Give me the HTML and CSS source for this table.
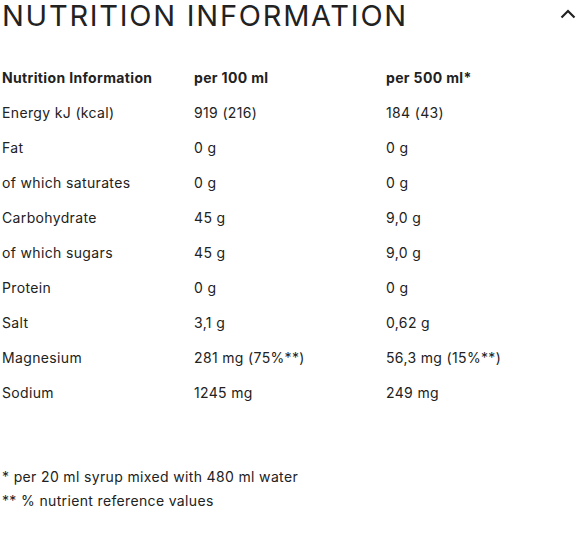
FILE: index.html
```html
<!DOCTYPE html>
<html lang="en">
<head>
    <meta charset="UTF-8">
    <meta name="viewport" content="width=device-width, initial-scale=1.0">
    <title>Nutrition Information</title>
    <link rel="stylesheet" href="styles.css">
</head>
<body>
    <div class="panel">
        <div class="panel-head">
            <h2>NUTRITION INFORMATION</h2>
            <svg class="chevron" width="16" height="10" viewBox="0 0 16 10">
                <path d="M1.5 8.5 L8 2 L14.5 8.5" fill="none" stroke="#222" stroke-width="2.2"/>
            </svg>
        </div>
        <table class="nutrition">
            <tr class="head"><td>Nutrition Information</td><td>per 100 ml</td><td>per 500 ml*</td></tr>
            <tr><td>Energy kJ (kcal)</td><td>919 (216)</td><td>184 (43)</td></tr>
            <tr><td>Fat</td><td>0 g</td><td>0 g</td></tr>
            <tr><td>of which saturates</td><td>0 g</td><td>0 g</td></tr>
            <tr><td>Carbohydrate</td><td>45 g</td><td>9,0 g</td></tr>
            <tr><td>of which sugars</td><td>45 g</td><td>9,0 g</td></tr>
            <tr><td>Protein</td><td>0 g</td><td>0 g</td></tr>
            <tr><td>Salt</td><td>3,1 g</td><td>0,62 g</td></tr>
            <tr><td>Magnesium</td><td>281 mg (75%**)</td><td>56,3 mg (15%**)</td></tr>
            <tr><td>Sodium</td><td>1245 mg</td><td>249 mg</td></tr>
        </table>
        <div class="notes">
            <p>* per 20 ml syrup mixed with 480 ml water</p>
            <p>** % nutrient reference values</p>
        </div>
    </div>
</body>
</html>
```

FILE: styles.css
```css
body {
    margin: 0;
    font-family: Inter, "Open Sans", sans-serif;
    color: #222;
    background: #fff;
    letter-spacing: 0.35px;
}
.panel {
    padding: 0 0 0 2px;
}
.panel-head {
    display: flex;
    justify-content: space-between;
    align-items: center;
}
.panel-head h2 {
    margin: 0;
    font-size: 29px;
    font-weight: 400;
    letter-spacing: 1.75px;
    line-height: 32px;
}
.chevron {
    margin-right: 1px;
    margin-top: -4px;
}
.nutrition {
    border-collapse: collapse;
    width: 576px;
    margin-top: 28px;
    font-size: 14px;
}
.nutrition td {
    padding: 0;
    height: 35px;
    width: 192px;
    vertical-align: middle;
}
.nutrition .head td {
    font-weight: 700;
}
.notes {
    margin-top: 55px;
    font-size: 14px;
}
.notes p {
    margin: 0;
    line-height: 24px;
}
```
